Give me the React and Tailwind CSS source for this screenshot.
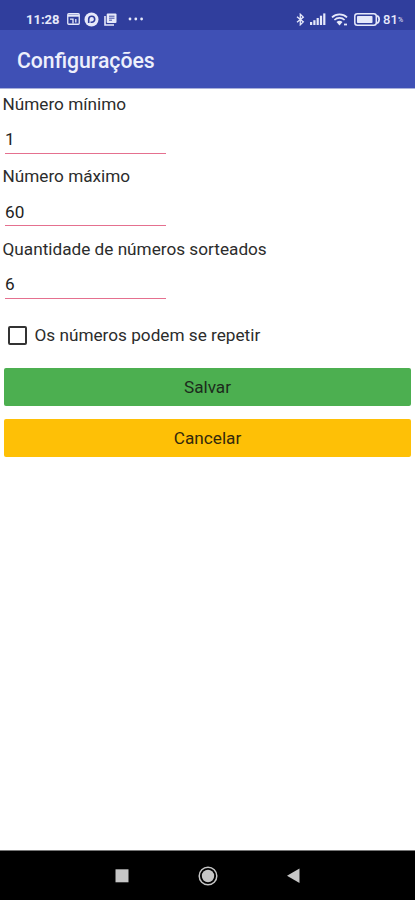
const fields = [
  { id: 'min', label: 'Número mínimo', value: '1' },
  { id: 'max', label: 'Número máximo', value: '60' },
  { id: 'qty', label: 'Quantidade de números sorteados', value: '6' },
];

const StatusBar = () => (
  <div className="h-[30px] bg-[#303e9d] text-[#e6e9fa] flex items-center justify-between pl-[26px] pr-[11px] pt-[8px]">
    <div className="flex items-center">
      <span className="w-[34px] text-[13px] leading-none font-bold whitespace-nowrap">11:28</span>
      <svg className="ml-[7px]" width="13" height="12" viewBox="0 0 13 12" fill="none" stroke="currentColor">
        <rect x="0.75" y="0.75" width="11.5" height="10.5" rx="1" strokeWidth="1.3" />
        <path d="M1 2.7h11" strokeWidth="2" />
        <path d="M3 6.2h3.2M6 5.6v5M8.8 6v3.5" strokeWidth="1.3" />
      </svg>
      <svg className="ml-[4px]" width="15" height="15" viewBox="0 0 15 15">
        <circle cx="7.5" cy="7.5" r="7" fill="currentColor" />
        <path d="M4.7 11V7.2a3 3 0 1 1 3 3H6.5" fill="none" stroke="#303e9d" strokeWidth="1.6" />
      </svg>
      <svg className="ml-[5px]" width="13" height="13" viewBox="0 0 13 13">
        <path d="M1 3v9h9" fill="none" stroke="currentColor" strokeWidth="1.6" />
        <rect x="2.7" y="0.5" width="9.8" height="9.5" rx="1" fill="currentColor" />
        <path d="M5 3.2h5.5M5 5.2h5.5M5 7.2h3" stroke="#303e9d" strokeWidth="0.9" />
      </svg>
      <svg className="ml-[11px]" width="16" height="4" viewBox="0 0 16 4" fill="currentColor">
        <circle cx="2" cy="2" r="1.4" />
        <circle cx="7.8" cy="2" r="1.4" />
        <circle cx="13.6" cy="2" r="1.4" />
      </svg>
    </div>
    <div className="flex items-center">
      <svg width="9" height="13" viewBox="0 0 9 13" fill="none" stroke="currentColor" strokeWidth="1.3">
        <path d="M1 3.7l6.3 5.2-3 2.9V1.2l3 2.9L1 9.3" />
      </svg>
      <svg className="ml-[5px]" width="16" height="12" viewBox="0 0 16 12" fill="currentColor">
        <rect x="0" y="9" width="2.2" height="3" />
        <rect x="3.3" y="7.2" width="2.2" height="4.8" />
        <rect x="6.6" y="5" width="2.2" height="7" />
        <rect x="9.9" y="2.7" width="2.2" height="9.3" />
        <rect x="13.2" y="0.4" width="2.2" height="11.6" />
      </svg>
      <svg className="ml-[5px]" width="18" height="13" viewBox="0 0 18 13" fill="none" stroke="currentColor">
        <path d="M1 4.3a11 11 0 0 1 15 0" strokeWidth="1.8" />
        <path d="M3.4 7a7.4 7.4 0 0 1 10.2 0" strokeWidth="1.7" />
        <path d="M5.5 9a4.6 4.6 0 0 1 6 0L8.5 12.4z" fill="currentColor" stroke="none" />
        <path d="M13 11.5h3" strokeWidth="1.8" />
      </svg>
      <svg className="ml-[5px]" width="27" height="13" viewBox="0 0 27 13">
        <rect x="0.8" y="0.8" width="21.5" height="11.4" rx="2.5" fill="none" stroke="currentColor" strokeWidth="1.5" />
        <rect x="3" y="3" width="15.5" height="7" rx="0.8" fill="currentColor" />
        <path d="M23.2 2.5a5 5 0 0 1 0 8" fill="none" stroke="currentColor" strokeWidth="1.8" />
      </svg>
      <span className="ml-[2px] w-[15px] text-[13px] leading-none font-medium">81</span>
      <span className="w-[6px] pt-[3px] text-[7px] leading-none">%</span>
    </div>
  </div>
);

const Field = ({ id, label, value }) => (
  <div className="h-[72.5px]">
    <label htmlFor={id} className="block pl-[2.5px] pt-[3.5px] text-[17.2px] leading-[22px] text-[#2c2c2c]">{label}</label>
    <input
      id={id}
      defaultValue={value}
      className="block ml-[5px] mt-[10px] w-[161px] h-[28px] pt-[1px] text-[17.2px] leading-[22px] text-[#222] outline-none"
    />
    <div className="ml-[5px] w-[161px] h-px bg-[#e5708f]" />
  </div>
);

const NavBar = () => (
  <div className="h-[50px] bg-black border-t border-[#777] flex items-center justify-center text-[#c6c6c6]">
    <svg width="186" height="22" viewBox="0 0 186 22" fill="currentColor">
      <rect x="0.5" y="4.3" width="13" height="13" />
      <circle cx="93" cy="11" r="6.2" />
      <circle cx="93" cy="11" r="8.8" fill="none" stroke="currentColor" strokeWidth="1.5" />
      <path d="M172 10.8l12.5-7.3v14.6z" />
    </svg>
  </div>
);

export default function App() {
  return (
    <div className="w-full h-screen flex flex-col bg-white font-[Roboto,sans-serif]">
      <StatusBar />
      <header className="h-[59px] bg-[#3f50b5] border-b border-[#a9b0da] flex items-center pl-[17px] pt-[4px]">
        <h1 className="text-[21.2px] font-medium leading-none text-[#eef0fc]">Configurações</h1>
      </header>
      <main className="flex-1">
        {fields.map((f) => (
          <Field key={f.id} {...f} />
        ))}
        <label className="flex items-center h-[34px] mt-[11.5px] pl-[8px] text-[17.2px] text-[#2c2c2c]">
          <span className="w-[19px] h-[19px] border-2 border-[#333] rounded-[2px] mr-[7.5px]" />
          <span className="pt-px">Os números podem se repetir</span>
        </label>
        <div className="flex flex-col gap-[13px] px-[4px] mt-[16px]">
          <button className="h-[38px] pt-[2px] rounded-[2px] bg-[#4caf50] text-[17.2px] text-[#1c2b1c]">Salvar</button>
          <button className="h-[38px] pt-[2px] rounded-[2px] bg-[#fec006] text-[17.2px] text-[#33290c]">Cancelar</button>
        </div>
      </main>
      <NavBar />
    </div>
  );
}
